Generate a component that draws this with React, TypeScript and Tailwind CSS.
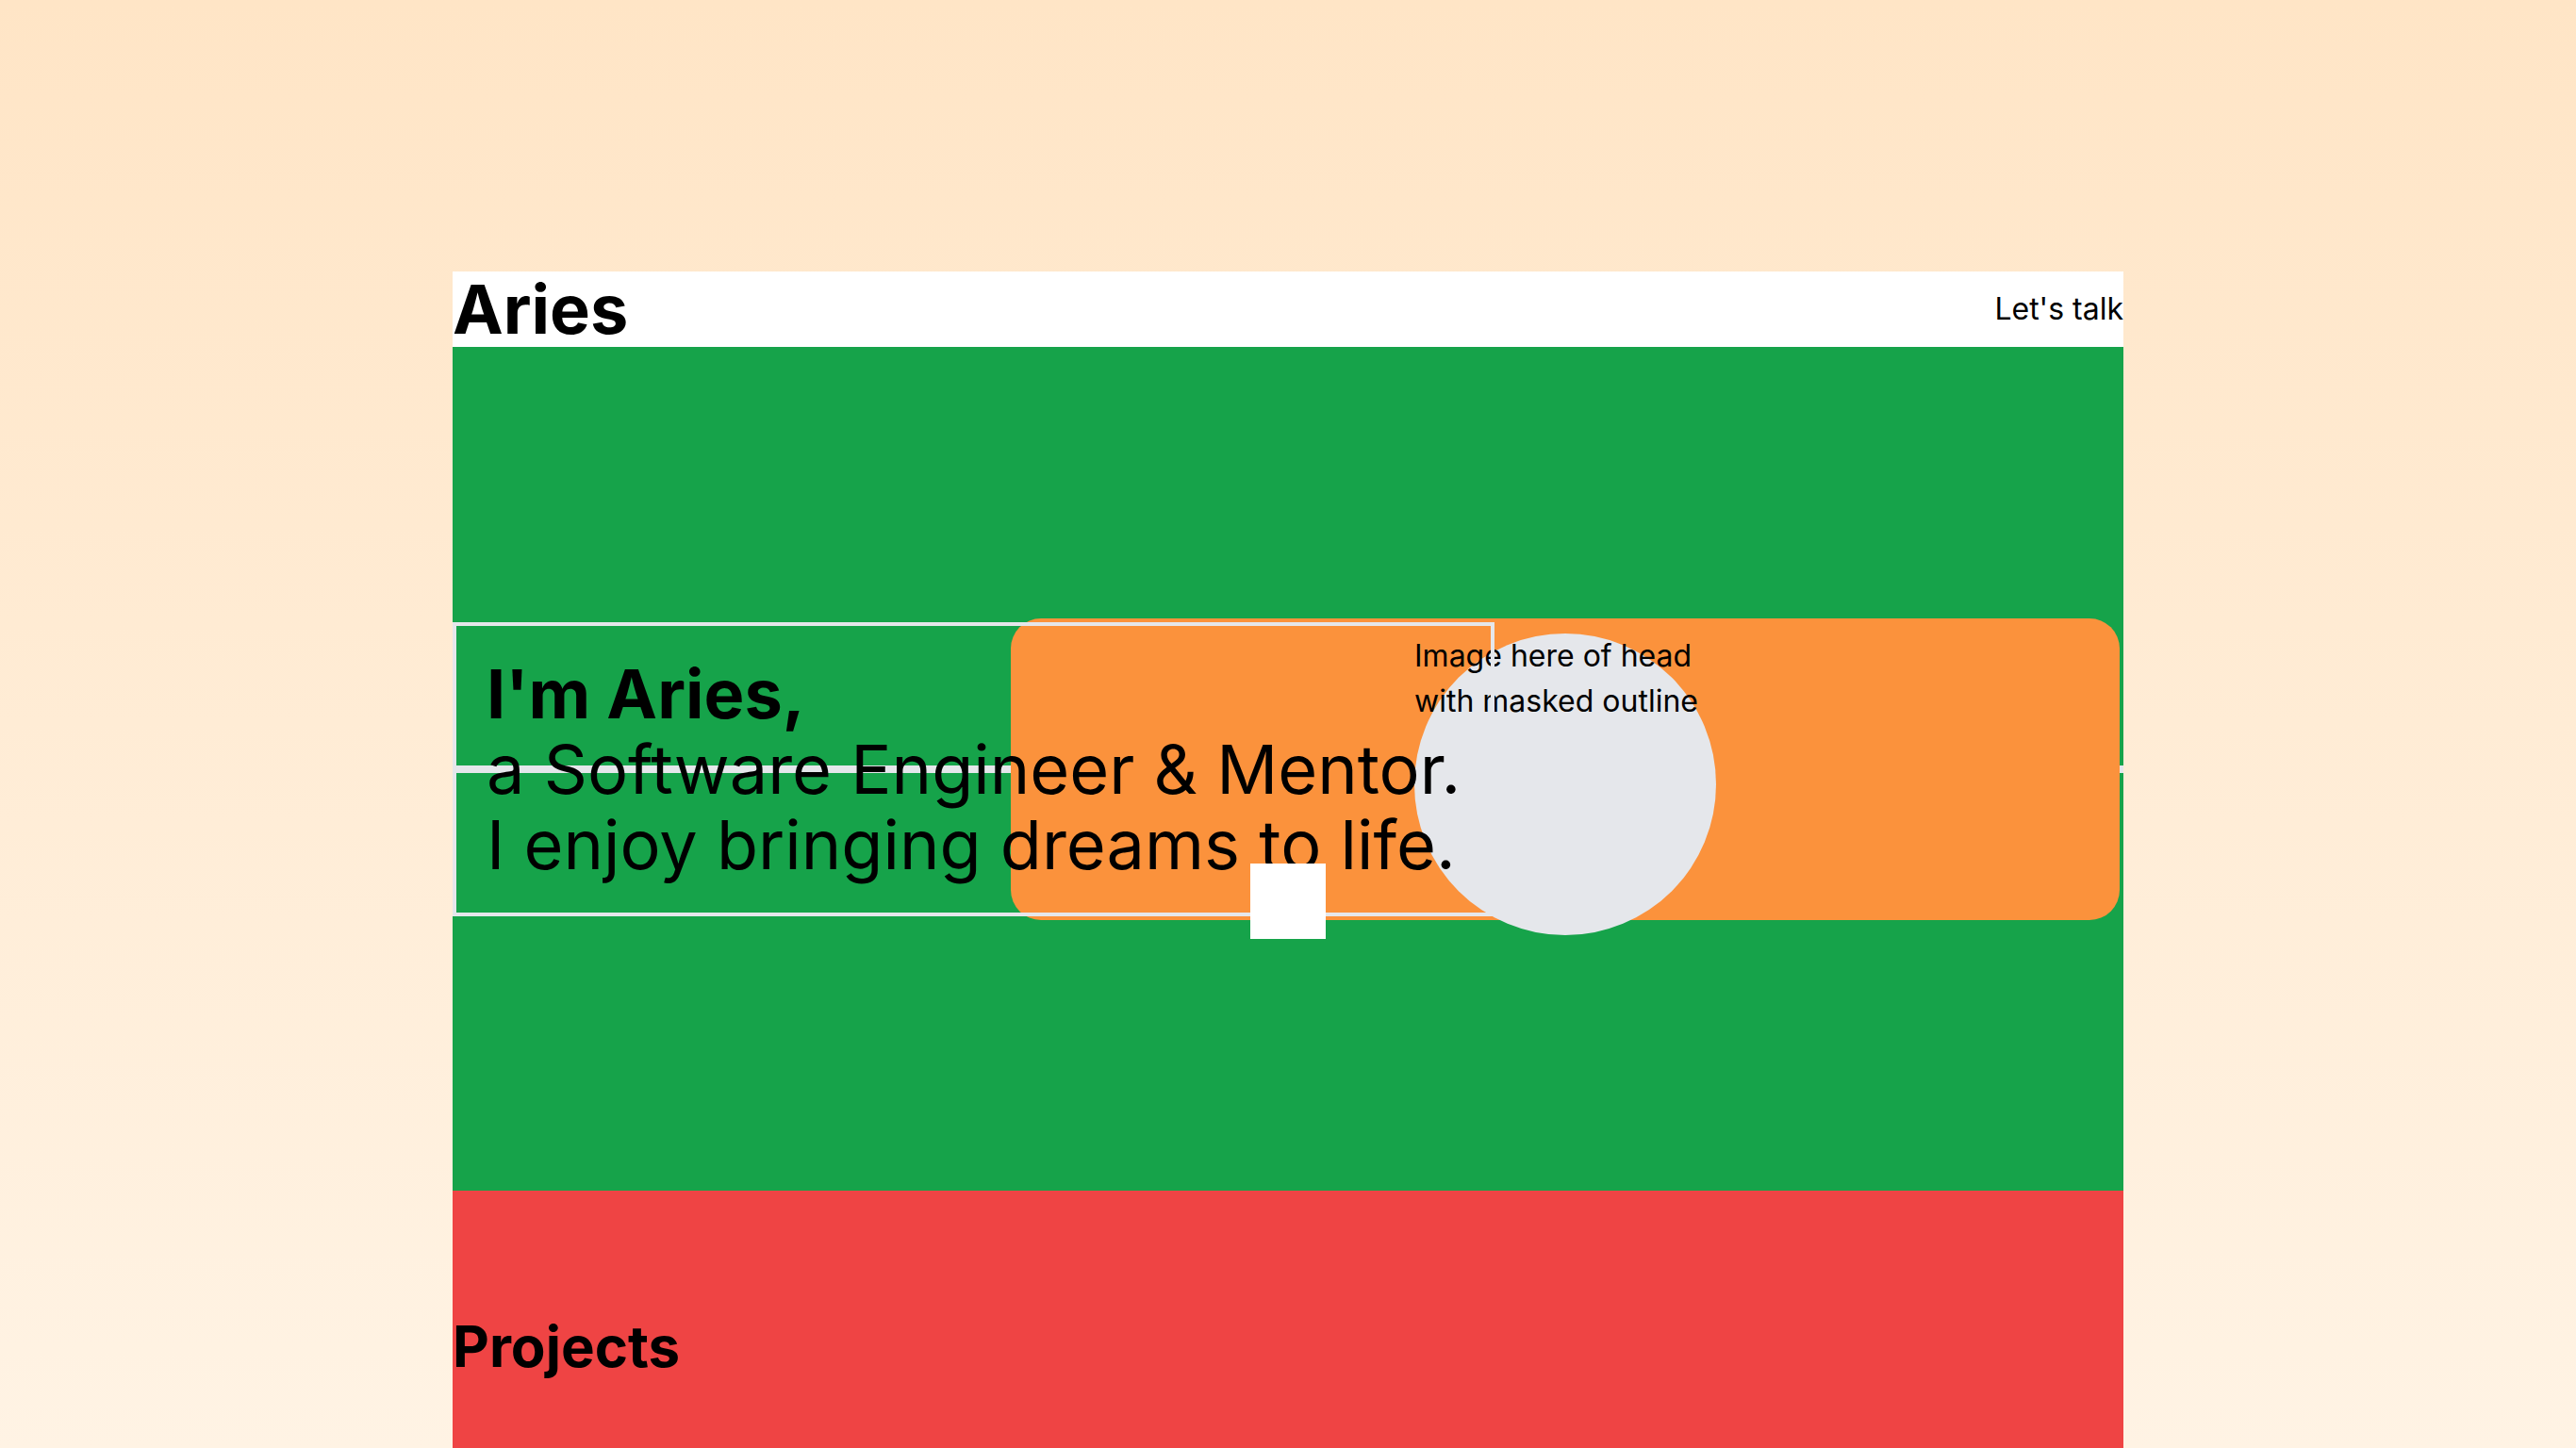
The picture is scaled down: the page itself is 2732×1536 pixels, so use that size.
export default function App() {
  return (
    <div className="min-h-screen bg-linear-to-b from-[#ffe5c6] to-[#fff3e4] bg-fixed pt-72 font-['Inter',sans-serif] text-black">
      <div className="mx-auto w-[1772px]">
        {/* top bar */}
        <header className="flex h-20 items-center justify-between bg-white">
          <h1 className="text-7xl font-bold leading-none">Aries</h1>
          <a href="#contact" className="text-[32px] leading-none">
            Let's talk
          </a>
        </header>

        {/* hero — everything stacked in one grid cell */}
        <section className="flex h-[895px] items-center bg-[#16a34a]">
          <div className="grid h-80 w-full">
            <div className="col-start-1 row-start-1 h-2 w-full self-center bg-[#e5e7eb]" />

            <div className="col-start-1 row-start-1 mr-1 flex h-80 w-[1176px] items-center justify-center justify-self-end rounded-4xl bg-[#fb923c]">
              <div className="mt-8 h-80 w-80 shrink-0 rounded-full bg-[#e5e7eb] text-[32px] leading-[48px]">
                Image here of head with masked outline
              </div>
            </div>

            <div className="col-start-1 row-start-1 w-fit self-center justify-self-start border-4 border-[#e5e7eb] p-8 text-7xl leading-20">
              <p className="font-bold">I'm Aries,</p>
              <p>a Software Engineer &amp; Mentor.</p>
              <p>I enjoy bringing dreams to life.</p>
            </div>

            <div className="col-start-1 row-start-1 h-20 w-20 translate-y-5 self-end justify-self-center bg-white" />
          </div>
        </section>

        {/* projects */}
        <section className="h-[895px] bg-[#ef4444] pt-[135px]">
          <h2 className="text-6xl font-bold leading-none">Projects</h2>
        </section>
      </div>
    </div>
  );
}
